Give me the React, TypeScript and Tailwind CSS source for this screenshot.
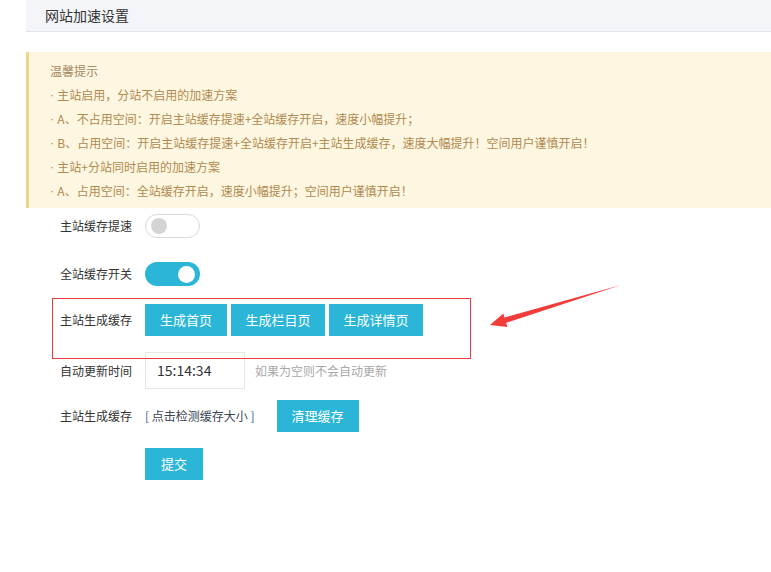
import type { ReactNode } from 'react'

const font = { fontFamily: '"Noto Sans CJK SC", "Noto Sans", sans-serif' }

function Btn({ children, className = 'px-[15px]' }: { children: ReactNode; className?: string }) {
  return (
    <button className={`h-[32px] bg-[#2bb6d8] text-white text-[13px] leading-[32px] ${className}`}>
      {children}
    </button>
  )
}

function Row({ label, className, children }: { label: string; className: string; children: ReactNode }) {
  return (
    <div className={`flex items-center pl-[60px] ${className}`}>
      <div className="w-[85px] text-[12px] text-[#333]">{label}</div>
      <div className="flex items-center">{children}</div>
    </div>
  )
}

function Toggle({ on }: { on?: boolean }) {
  return on ? (
    <div className="w-[55px] h-[24px] rounded-full bg-[#2bb6d8] flex items-center justify-end pr-[5px]">
      <div className="w-[17px] h-[17px] rounded-full bg-white" />
    </div>
  ) : (
    <div className="w-[55px] h-[24px] rounded-full bg-white border border-[#d9d9d9] flex items-center pl-[5px]">
      <div className="w-[16px] h-[16px] rounded-full bg-[#d4d4d4]" />
    </div>
  )
}

const tips = [
  '主站启用，分站不启用的加速方案',
  'A、不占用空间：开启主站缓存提速+全站缓存开启，速度小幅提升；',
  'B、占用空间：开启主站缓存提速+全站缓存开启+主站生成缓存，速度大幅提升！空间用户谨慎开启！',
  '主站+分站同时启用的加速方案',
  'A、占用空间：全站缓存开启，速度小幅提升；空间用户谨慎开启！',
]

export default function App() {
  return (
    <div className="relative w-[771px] h-[572px] bg-white overflow-hidden" style={font}>
      {/* Header */}
      <div className="ml-[26px] h-[32px] bg-[#f4f5f8] border-b border-[#e2e4e9] pl-[19px] flex items-center text-[14px] text-[#333]">
        网站加速设置
      </div>

      {/* Tips */}
      <div className="ml-[26px] mt-[20px] bg-[#fdf6e0] border-l-[3px] border-[#efd490] pl-[21px] pt-[7px] pb-[5px] text-[12px] leading-[24px] text-[#b08a50]">
        <div className="h-[24px] text-[#a48a66]">温馨提示</div>
        {tips.map((t) => (
          <div key={t} className="h-[24px] flex items-center">
            <span className="font-['Liberation_Sans',sans-serif] whitespace-pre">· </span>
            <span>{t}</span>
          </div>
        ))}
      </div>

      {/* Form */}
      <Row label="主站缓存提速" className="mt-[6px]">
        <Toggle />
      </Row>
      <Row label="全站缓存开关" className="mt-[24px]">
        <Toggle on />
      </Row>
      <Row label="主站生成缓存" className="mt-[18px]">
        <div className="flex gap-[4px]">
          <Btn>生成首页</Btn>
          <Btn className="px-[14.5px]">生成栏目页</Btn>
          <Btn className="px-[14.5px]">生成详情页</Btn>
        </div>
      </Row>
      <Row label="自动更新时间" className="mt-[16px]">
        <div className="w-[100px] h-[37px] border border-[#e6e6e6] flex items-center pl-[11px] text-[14px] text-[#333]">
          15:14:34
        </div>
        <span className="ml-[10px] text-[12px] text-[#a8a8a8]">如果为空则不会自动更新</span>
      </Row>
      <Row label="主站生成缓存" className="mt-[11px]">
        <span className="text-[12px] text-[#3a4656]">
          <span className="text-[#2d5f8f]">[</span> 点击检测缓存大小 <span className="text-[#2d5f8f]">]</span>
        </span>
        <div className="ml-[22px]">
          <Btn>清理缓存</Btn>
        </div>
      </Row>
      <div className="pl-[145px] mt-[16px]">
        <Btn className="px-[16px]">提交</Btn>
      </div>

      {/* Annotation box */}
      <div className="absolute left-[52px] top-[298px] w-[419px] h-[61px] border border-[#ee3b3b] pointer-events-none" />

      {/* Annotation arrow */}
      <svg className="absolute left-0 top-0 pointer-events-none" width="771" height="572">
        <polygon
          points="490,325 503.3,313.6 504.4,317.6 621,285 506.2,322.8 507.3,327"
          fill="#f23c3c"
        />
      </svg>
    </div>
  )
}
